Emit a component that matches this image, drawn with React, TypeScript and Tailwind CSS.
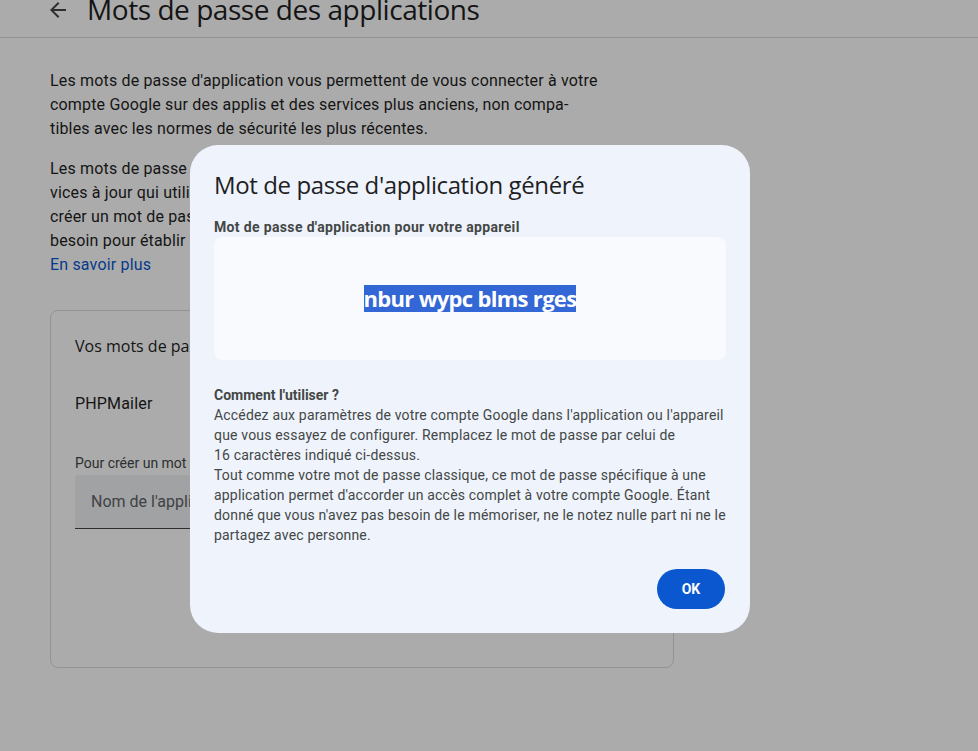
import { useState } from "react";

function BackArrow() {
  return (
    <svg width="24" height="24" viewBox="0 0 24 24" className="shrink-0 -mt-[2px] fill-[#444746]">
      <path d="M20 11H7.83l5.59-5.59L12 4l-8 8 8 8 1.41-1.41L7.83 13H20v-2z" />
    </svg>
  );
}

function GeneratedDialog({ onClose }: { onClose: () => void }) {
  return (
    <div className="absolute left-[190px] top-[145px] w-[560px] rounded-[28px] bg-[#eef3fc] px-6 pt-6 pb-6 font-['Roboto',sans-serif]">
      <h2 className="font-['Open_Sans',sans-serif] text-[24px] leading-8 text-[#1f1f1f] tracking-[-0.4px]">
        Mot de passe d'application généré
      </h2>
      <div className="mt-4 text-[14px] leading-5 font-bold tracking-[0.35px] text-[#444746]">
        Mot de passe d'application pour votre appareil
      </div>
      <div className="flex h-[123px] items-center justify-center rounded-lg bg-[#f8fafd]">
        <span className="bg-[#3367d6] font-['Open_Sans',sans-serif] text-[22px] leading-[27px] font-bold tracking-[-0.7px] text-white">
          nbur wypc blms rges
        </span>
      </div>
      <div className="mt-[25px] text-[14px] leading-5 tracking-[0.18px] text-[#444746]">
        <div className="font-bold tracking-normal">Comment l'utiliser ?</div>
        <p>
          Accédez aux paramètres de votre compte Google dans l'application ou l'appareil
          que vous essayez de configurer. Remplacez le mot de passe par celui de
          <br />
          16 caractères indiqué ci-dessus.
          <br />
          Tout comme votre mot de passe classique, ce mot de passe spécifique à une
          application permet d'accorder un accès complet à votre compte Google. Étant
          donné que vous n'avez pas besoin de le mémoriser, ne le notez nulle part ni ne le
          partagez avec personne.
        </p>
      </div>
      <div className="mt-6 flex justify-end">
        <button
          onClick={onClose}
          className="mr-px h-10 w-[68px] rounded-full bg-[#0b57d0] text-[14px] font-bold text-white"
        >
          OK
        </button>
      </div>
    </div>
  );
}

export default function App() {
  const [open, setOpen] = useState(true);

  return (
    <div className="relative h-[751px] w-[978px] overflow-hidden bg-white font-['Roboto',sans-serif] text-[#1f1f1f]">
      {/* page header */}
      <div className="flex h-[38px] items-start gap-[17px] border-b border-[#dadce0] pl-[46px]">
        <BackArrow />
        <h1 className="-mt-[5px] font-['Open_Sans',sans-serif] text-[28px] leading-[28px] tracking-[-0.45px] text-[#1f1f1f]">
          Mots de passe des applications
        </h1>
      </div>

      <div className="pl-[50px]">
        <p className="mt-[31px] text-[16px] leading-6 tracking-[0.17px] text-[#1f1f1f]">
          Les mots de passe d'application vous permettent de vous connecter à votre
          <br />
          compte Google sur des applis et des services plus anciens, non compa-
          <br />
          tibles avec les normes de sécurité les plus récentes.
        </p>
        <p className="mt-4 text-[16px] leading-6 tracking-[0.17px] text-[#1f1f1f]">
          Les mots de passe d'application sont moins sécurisés que les applis et ser-
          <br />
          vices à jour qui utilisent les normes de sécurité modernes. Avant de
          <br />
          créer un mot de passe d'application, vérifiez si votre appli en a
          <br />
          besoin pour établir la connexion.
          <br />
          <a className="text-[#0b57d0]">En savoir plus</a>
        </p>

        <div className="mt-[33px] h-[358px] w-[624px] rounded-lg border border-[#dadce0] px-6 pt-6">
          <div className="font-['Open_Sans',sans-serif] text-[16px] leading-[22px] font-medium">
            Vos mots de passe d'application
          </div>
          <div className="mt-[35px] text-[16px] leading-6 tracking-[0.17px]">PHPMailer</div>
          <div className="mt-[37px] text-[14px] leading-5 text-[#444746]">
            Pour créer un mot de passe spécifique à une application, saisissez son nom ci-dessous
          </div>
          <div className="mt-[2px] flex h-[54px] w-[560px] items-center rounded-t border-b border-[#444746] bg-[#f0f2f5] px-4 text-[16px] text-[#5f6368]">
            Nom de l'application
          </div>
        </div>
      </div>

      {open && (
        <>
          <div className="absolute inset-0 bg-black/[0.33]" />
          <GeneratedDialog onClose={() => setOpen(false)} />
        </>
      )}
    </div>
  );
}
